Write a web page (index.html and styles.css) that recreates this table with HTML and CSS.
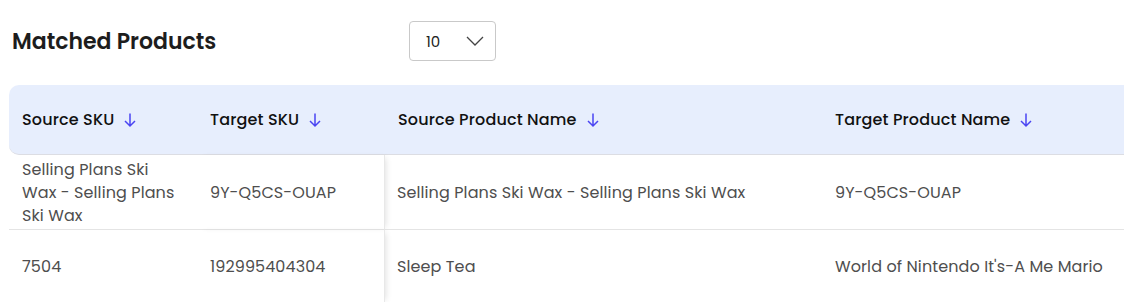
FILE: index.html
```html
<!DOCTYPE html>
<html lang="en">
<head>
<meta charset="utf-8">
<title>Matched Products</title>
<link rel="stylesheet" href="styles.css">
</head>
<body>
<div class="page">
  <div class="toolbar">
    <h1 class="title">Matched Products</h1>
    <div class="select">
      <span class="select-value">10</span>
      <svg class="chev" width="18" height="10" viewBox="0 0 18 10"><path d="M1 1 L9 9 L17 1" fill="none" stroke="#444" stroke-width="1.3"/></svg>
    </div>
  </div>
  <div class="table-wrap">
    <table class="grid">
      <colgroup>
        <col class="c1"><col class="c2"><col class="c3"><col class="c4">
      </colgroup>
      <thead>
        <tr>
          <th class="first"><span class="th">Source SKU<svg class="arr" width="12" height="16" viewBox="0 0 12 16"><path d="M6 1.5 V14 M1 9 L6 14 L11 9" fill="none" stroke="#4a44f2" stroke-width="1.5"/></svg></span></th>
          <th><span class="th">Target SKU<svg class="arr" width="12" height="16" viewBox="0 0 12 16"><path d="M6 1.5 V14 M1 9 L6 14 L11 9" fill="none" stroke="#4a44f2" stroke-width="1.5"/></svg></span></th>
          <th><span class="th">Source Product Name<svg class="arr" width="12" height="16" viewBox="0 0 12 16"><path d="M6 1.5 V14 M1 9 L6 14 L11 9" fill="none" stroke="#4a44f2" stroke-width="1.5"/></svg></span></th>
          <th><span class="th">Target Product Name<svg class="arr" width="12" height="16" viewBox="0 0 12 16"><path d="M6 1.5 V14 M1 9 L6 14 L11 9" fill="none" stroke="#4a44f2" stroke-width="1.5"/></svg></span></th>
        </tr>
      </thead>
      <tbody>
        <tr class="r1">
          <td><div class="wrap">Selling Plans Ski Wax - Selling Plans Ski Wax</div></td>
          <td class="sticky-end">9Y-Q5CS-OUAP</td>
          <td>Selling Plans Ski Wax - Selling Plans Ski Wax</td>
          <td>9Y-Q5CS-OUAP</td>
        </tr>
        <tr class="r2">
          <td>7504</td>
          <td class="sticky-end">192995404304</td>
          <td>Sleep Tea</td>
          <td>World of Nintendo It's-A Me Mario</td>
        </tr>
      </tbody>
    </table>
  </div>
</div>
</body>
</html>
```

FILE: styles.css
```css
* { box-sizing: border-box; }
html, body { margin: 0; padding: 0; background: #fff; }
body {
  font-family: "Poppins", "Open Sans", "DejaVu Sans", sans-serif;
  color: #1b1b1b;
  overflow: hidden;
}
.page { padding: 21px 0 0 9px; }
.toolbar {
  display: flex;
  align-items: center;
  height: 40px;
  padding-left: 3px;
}
.title {
  margin: 0;
  width: 397px;
  font-size: 22px;
  font-weight: 600;
  color: #1d1d1d;
}
.select {
  width: 87px;
  height: 40px;
  border: 1px solid #c9c9c9;
  border-radius: 4px;
  display: flex;
  align-items: center;
  padding-left: 16px;
  gap: 26px;
}
.select-value { font-size: 15px; color: #222; }
.chev { display: block; }
.table-wrap {
  margin-top: 24px;
  overflow: hidden;
}
.grid {
  border-collapse: separate;
  border-spacing: 0;
  table-layout: fixed;
  width: 1360px;
}
col.c1 { width: 188px; }
col.c2 { width: 188px; }
col.c3 { width: 437px; }
col.c4 { width: 547px; }
thead th {
  background: #e7eefd;
  height: 70px;
  text-align: left;
  font-weight: 500;
  font-size: 16px;
  letter-spacing: 0.15px;
  color: #111;
  padding: 0 13px;
  border-bottom: 1px solid #dcdde3;
  vertical-align: middle;
}
thead th.first { border-radius: 10px 0 0 10px; }
.th { display: inline-flex; align-items: center; gap: 10px; }
.arr { display: block; }
tbody td {
  font-size: 16px;
  letter-spacing: 0.1px;
  color: #4e4e4e;
  padding: 0 13px;
  border-bottom: 1px solid #e4e4e4;
  vertical-align: middle;
}
tbody td:nth-child(3) { padding-left: 12px; }
.r1 td { height: 75px; }
.r2 td { height: 73px; }
.wrap { line-height: 23px; }
td.sticky-end {
  border-right: 1px solid #e8e8e8;
  box-shadow: 4px 0 6px -3px rgba(0,0,0,0.12);
}
```
